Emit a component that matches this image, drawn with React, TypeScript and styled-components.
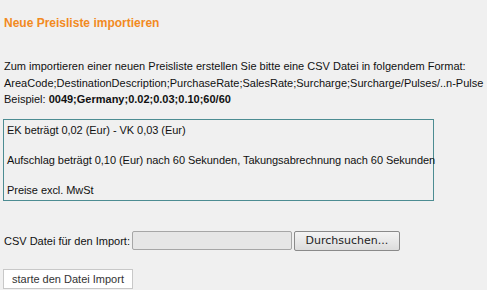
import styled, { createGlobalStyle } from "styled-components";

const GlobalStyle = createGlobalStyle`
  html, body {
    margin: 0;
    background: #f0f0f0;
  }
  body {
    font-family: "Liberation Sans", Arial, sans-serif;
    font-size: 11px;
    color: #111;
  }
`;

const Page = styled.div`
  padding: 15px 3px 0 3px;
`;

const Title = styled.h3`
  margin: 0 0 0 1px;
  font-size: 12px;
  font-weight: bold;
  color: #f28a1f;
  line-height: 16px;
`;

const Intro = styled.p`
  margin: 27px 0 0 1px;
  line-height: 16.5px;
`;

const InfoBox = styled.div`
  margin-top: 11px;
  width: 431px;
  height: 82px;
  box-sizing: border-box;
  border: 1px solid #4c8c92;
  padding: 2px 0 2px 3px;
  display: flex;
  flex-direction: column;
  justify-content: space-between;
  line-height: 16px;
  white-space: nowrap;
  letter-spacing: -0.05px;
`;

const UploadRow = styled.div`
  margin-top: 30px;
  display: flex;
  align-items: center;
  gap: 2px;
`;

const Label = styled.span`
  margin-left: 1px;
`;

const FileField = styled.div`
  width: 160px;
  height: 19px;
  background: #e6e6e6;
  border: 1px solid #a6a6a6;
  border-radius: 2px;
  box-sizing: border-box;
`;

const BrowseButton = styled.div`
  width: 106px;
  height: 20px;
  box-sizing: border-box;
  border: 1px solid #8a8a8a;
  border-radius: 2px;
  background: linear-gradient(#f4f4f4, #dcdcdc);
  font-family: "DejaVu Sans", sans-serif;
  font-size: 11px;
  display: flex;
  align-items: center;
  justify-content: center;
  color: #222;
`;

const StartButton = styled.div`
  margin-top: 18px;
  width: 130px;
  height: 20px;
  box-sizing: border-box;
  border: 1px solid #c8c8c8;
  background: #fff;
  display: flex;
  align-items: center;
  justify-content: center;
  color: #333;
`;

export default function App() {
  return (
    <>
      <GlobalStyle />
      <Page>
        <Title>Neue Preisliste importieren</Title>
        <Intro>
          Zum importieren einer neuen Preisliste erstellen Sie bitte eine CSV
          Datei in folgendem Format:
          <br />
          AreaCode;DestinationDescription;PurchaseRate;SalesRate;Surcharge;Surcharge/Pulses/..n-Pulse
          <br />
          Beispiel: <b>0049;Germany;0.02;0.03;0.10;60/60</b>
        </Intro>
        <InfoBox>
          <div>EK beträgt 0,02 (Eur) - VK 0,03 (Eur)</div>
          <div>
            Aufschlag beträgt 0,10 (Eur) nach 60 Sekunden, Takungsabrechnung
            nach 60 Sekunden
          </div>
          <div>Preise excl. MwSt</div>
        </InfoBox>
        <UploadRow>
          <Label>CSV Datei für den Import:</Label>
          <FileField />
          <BrowseButton>Durchsuchen...</BrowseButton>
        </UploadRow>
        <StartButton>starte den Datei Import</StartButton>
      </Page>
    </>
  );
}
